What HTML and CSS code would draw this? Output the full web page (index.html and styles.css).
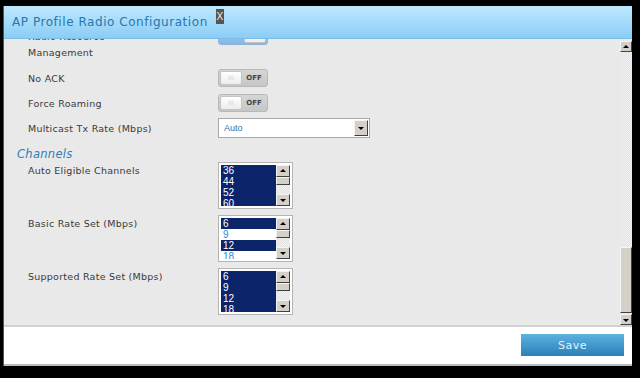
FILE: index.html
```html
<!DOCTYPE html>
<html lang="en">
<head>
  <meta charset="UTF-8" />
  <title>AP Profile Radio Configuration</title>
  <link rel="stylesheet" href="styles.css">
</head>
<body>
  <div class="dialog">
    <div class="dialog-header">
      <span class="dialog-title">AP Profile Radio Configuration</span>
      <span class="close">X</span>
    </div>

    <div class="dialog-body">
      <div class="scroll-area">
        <div class="form">
          <div class="row row-first">
            <label>Radio Resource<br>Management</label>
            <span class="toggle on"><span class="knob"></span></span>
          </div>
          <div class="row row-toggle">
            <label>No ACK</label>
            <span class="toggle"><span class="knob">III</span><span class="state">OFF</span></span>
          </div>
          <div class="row row-toggle">
            <label>Force Roaming</label>
            <span class="toggle"><span class="knob">III</span><span class="state">OFF</span></span>
          </div>
          <div class="row row-select">
            <label>Multicast Tx Rate (Mbps)</label>
            <span class="select"><span class="select-text">Auto</span><span class="select-btn"></span></span>
          </div>

          <h3 class="section">Channels</h3>

          <div class="row row-list">
            <label>Auto Eligible Channels</label>
            <div class="listbox">
              <ul>
                <li class="sel">36</li>
                <li class="sel">44</li>
                <li class="sel">52</li>
                <li class="sel">60</li>
              </ul>
              <div class="mini-bar">
                <span class="btn up"></span>
                <span class="thumb"></span>
                <span class="track"></span>
                <span class="btn down"></span>
              </div>
            </div>
          </div>
          <div class="row row-list">
            <label>Basic Rate Set (Mbps)</label>
            <div class="listbox">
              <ul>
                <li class="sel">6</li>
                <li>9</li>
                <li class="sel">12</li>
                <li>18</li>
              </ul>
              <div class="mini-bar">
                <span class="btn up"></span>
                <span class="thumb"></span>
                <span class="track"></span>
                <span class="btn down"></span>
              </div>
            </div>
          </div>
          <div class="row row-list">
            <label>Supported Rate Set (Mbps)</label>
            <div class="listbox">
              <ul>
                <li class="sel">6</li>
                <li class="sel">9</li>
                <li class="sel">12</li>
                <li class="sel">18</li>
              </ul>
              <div class="mini-bar">
                <span class="btn up"></span>
                <span class="thumb"></span>
                <span class="track"></span>
                <span class="btn down"></span>
              </div>
            </div>
          </div>
        </div>
      </div>

      <div class="page-bar">
        <span class="btn up"></span>
        <span class="track"></span>
        <span class="thumb"></span>
        <span class="btn down"></span>
      </div>
    </div>

    <div class="dialog-footer">
      <button class="save">Save</button>
    </div>
  </div>
</body>
</html>
```

FILE: styles.css
```css
* {
  box-sizing: border-box;
}

body {
  margin: 0;
  background: #000;
  font-family: 'DejaVu Sans', sans-serif;
}

.dialog {
  margin: 6px 0 0 3px;
  width: 629px;
  height: 360px;
  display: flex;
  flex-direction: column;
  background: #fff;
  border-left: 1px solid #555;
}

.dialog-header {
  height: 33px;
  flex: none;
  display: flex;
  align-items: flex-start;
  padding: 8px 0 0 8px;
  background: linear-gradient(#bde9ff, #8cccf5);
  border-bottom: 1px solid #7cbde8;
}

.dialog-title {
  color: #2877ae;
  font-size: 12px;
  letter-spacing: 0.55px;
  margin-top: 1px;
}

.close {
  margin-left: 8px;
  margin-top: -5px;
  width: 8px;
  height: 15px;
  background: #555;
  color: #eee;
  font-size: 10px;
  line-height: 15px;
  text-align: center;
  font-family: 'Liberation Sans', sans-serif;
}

.dialog-body {
  height: 288px;
  flex: none;
  display: flex;
  background: #e9e9e9;
  border-bottom: 2px solid #d2d2d2;
}

.scroll-area {
  flex: 1;
  overflow: hidden;
}

.form {
  margin-top: -12px;
  padding-left: 24px;
}

.row {
  display: flex;
  align-items: center;
}

.row label {
  width: 190px;
  flex: none;
  color: #3a3a3a;
  font-size: 9.5px;
  letter-spacing: 0.25px;
  line-height: 15px;
}

.row-first {
  align-items: flex-start;
  height: 35px;
}

.row-first label {
  padding-top: 2px;
  line-height: 16px;
}

.row-toggle {
  height: 18px;
  margin-top: 7px;
}

.row-select {
  height: 20px;
  margin-top: 6px;
}

.row-list {
  align-items: flex-start;
  height: 46px;
  margin-bottom: 7px;
}

.row-list label {
  margin-top: 1px;
}

.toggle {
  width: 50px;
  height: 18px;
  display: flex;
  align-items: center;
  border: 1px solid #b8b8b8;
  border-radius: 3px;
  background: linear-gradient(#d6d6d6, #c6c6c6);
  padding: 1px;
}

.toggle .knob {
  width: 22px;
  height: 14px;
  background: linear-gradient(#fff, #ececec);
  border: 1px solid #c4c4c4;
  border-radius: 2px;
  color: #cfcfcf;
  font-size: 6px;
  text-align: center;
  line-height: 12px;
}

.toggle .state {
  flex: 1;
  text-align: center;
  font-size: 7px;
  font-weight: bold;
  color: #444;
}

.toggle.on {
  justify-content: flex-end;
  background: linear-gradient(#a6cdf2, #84b6e6);
  border-color: #8fb4d8;
}

.select {
  width: 152px;
  height: 20px;
  display: flex;
  align-items: center;
  justify-content: space-between;
  background: #fff;
  border: 1px solid #a9a9a9;
  padding: 0 1px 0 5px;
}

.select-text {
  color: #2a72b4;
  font-family: 'Liberation Sans', sans-serif;
  font-size: 9px;
}

.select-btn {
  width: 14px;
  height: 16px;
  background: #d4d0c8;
  border: 1px solid;
  border-color: #f4f4f4 #404040 #404040 #f4f4f4;
  position: relative;
}

.select-btn::after,
.btn::after {
  content: "";
  position: absolute;
  left: 50%;
  top: 50%;
  margin: -1px 0 0 -3px;
  border-left: 3px solid transparent;
  border-right: 3px solid transparent;
  border-top: 3px solid #000;
}

.btn.up::after {
  border-top: none;
  border-bottom: 3px solid #000;
  margin-top: -2px;
}

.section {
  margin: 9px 0 0 -11px;
  height: 15px;
  font-size: 11.5px;
  line-height: 15px;
  font-weight: normal;
  font-style: italic;
  color: #2f7db8;
  letter-spacing: 0.3px;
}

.listbox {
  width: 75px;
  height: 47px;
  display: flex;
  background: #fff;
  border: 1px solid #b4b4b4;
  padding: 2px;
}

.listbox ul {
  list-style: none;
  margin: 0;
  padding: 0;
  flex: 1;
  overflow: hidden;
}

.listbox li {
  height: 11px;
  line-height: 11px;
  padding-left: 2px;
  font-family: 'Liberation Sans', sans-serif;
  font-size: 10px;
  color: #2f86c8;
}

.listbox li.sel {
  background: #0b246a;
  color: #fff;
}

.mini-bar,
.page-bar {
  width: 14px;
  display: flex;
  flex-direction: column;
  background: repeating-conic-gradient(#f2f2f2 0 25%, #e2e2e2 0 50%) 0 0 / 2px 2px;
}

.btn,
.thumb {
  display: block;
  flex: none;
  position: relative;
  background: #d4d0c8;
  border: 1px solid;
  border-color: #f4f4f4 #404040 #404040 #f4f4f4;
}

.btn {
  height: 12px;
}

.mini-bar .thumb {
  height: 8px;
}

.track {
  flex: 1;
}

.page-bar {
  width: 12px;
  padding-top: 2px;
}

.page-bar .btn {
  height: 11px;
}

.page-bar .thumb {
  height: 66px;
  margin-bottom: 1px;
}

.dialog-footer {
  flex: 1;
  display: flex;
  justify-content: flex-end;
  align-items: flex-start;
  padding: 7px 8px 0 0;
  border-bottom: 2px solid #bbb;
}

.save {
  width: 103px;
  height: 22px;
  border: none;
  background: linear-gradient(#5db2e0, #2a80b8);
  color: #e6f2fa;
  font-family: 'DejaVu Sans', sans-serif;
  font-size: 11px;
  letter-spacing: 0.5px;
  padding: 0;
}
```
